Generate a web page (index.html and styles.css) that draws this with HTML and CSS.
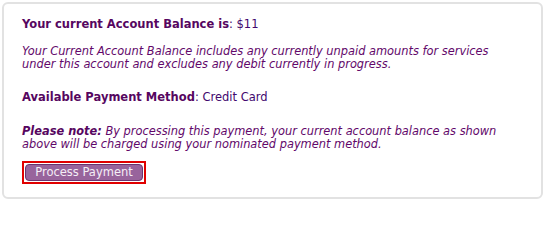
FILE: index.html
```html
<!DOCTYPE html>
<html>
<head>
<meta charset="utf-8">
<link rel="stylesheet" href="styles.css">
</head>
<body>
<div class="panel">
  <p class="row row-first"><span class="label">Your current Account Balance is</span>: $11</p>
  <p class="note note-first">Your Current Account Balance includes any currently unpaid amounts for services under this account and excludes any debit currently in progress.</p>
  <p class="row"><span class="label">Available Payment Method</span>: Credit Card</p>
  <p class="note note-last"><b>Please note:</b> By processing this payment, your current account balance as shown above will be charged using your nominated payment method.</p>
  <div class="btn-wrap"><button class="btn">Process Payment</button></div>
</div>
</body>
</html>
```
FILE: styles.css
```css
html, body { margin: 0; padding: 0; background: #fff; }
body { padding: 2px; font-family: "DejaVu Sans", Verdana, sans-serif; font-size: 11.4px; }
.panel {
  width: 541px;
  height: 197px;
  box-sizing: border-box;
  border: 2px solid #e2e2e2;
  border-radius: 6px;
  padding: 13px 35px 0 18px;
}
.row { margin: 0 0 21px; font-size: 11.5px; line-height: 14px; color: #42086e; }
.row-first { margin-bottom: 14px; }
.label { font-weight: bold; color: #560660; }
.note { margin: 0 0 20px; font-style: italic; line-height: 13px; color: #62086a; }
.note-first { margin-bottom: 19px; }
.note-last { margin-bottom: 10px; }
.note b { font-weight: bold; color: #560660; }
.btn-wrap { display: inline-block; border: 2px solid #e00000; padding: 1px; }
.btn {
  display: block;
  margin: 0;
  width: 118px;
  height: 17px;
  padding: 0;
  font-family: "DejaVu Sans", Verdana, sans-serif;
  font-size: 11.5px;
  line-height: 15px;
  color: #f4eef6;
  background: #98649c;
  border: 1px solid #6a3570;
  border-radius: 4px;
}
```
